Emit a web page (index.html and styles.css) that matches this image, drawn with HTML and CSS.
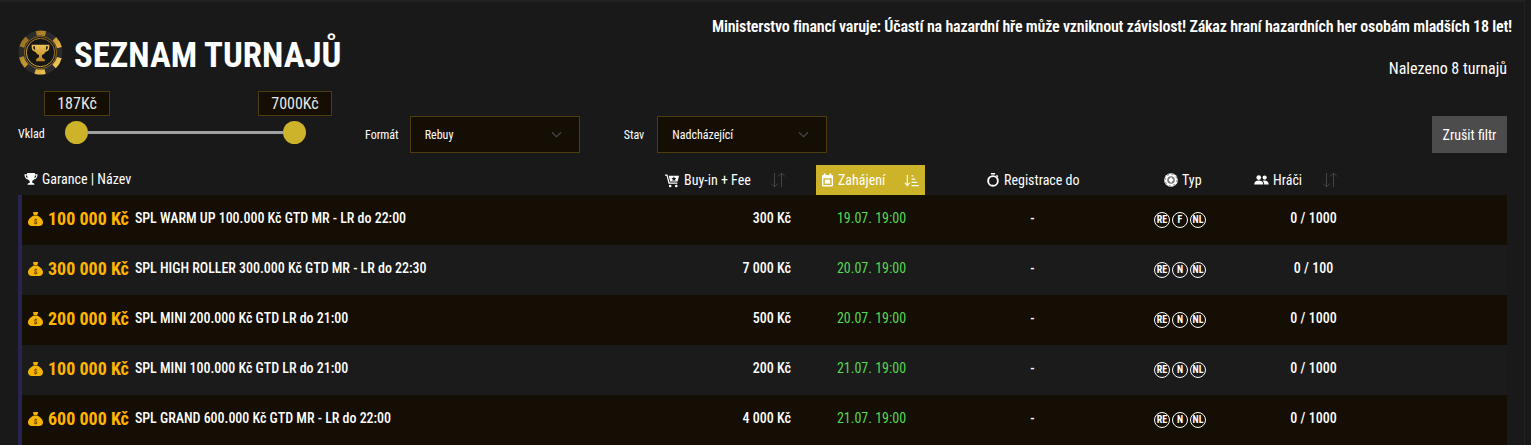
FILE: index.html
```html
<!DOCTYPE html>
<html lang="cs">
<head>
  <meta charset="UTF-8">
  <meta name="viewport" content="width=device-width, initial-scale=1.0">
  <title>Seznam turnajů</title>
  <link rel="stylesheet" href="styles.css">
</head>
<body>
  <svg class="defs" width="0" height="0">
    <defs>
      <symbol id="bag" viewBox="0 0 15 14">
        <path fill="#f5b400" d="M4.800 0c.9.5 1.600.1 2.700.1s1.800-.4 2.700-.1L9.200 3H5.800zM5.800 3.600h3.400C12 4.800 15 7.500 15 10.500c0 2.300-1.700 3.500-3.800 3.500H3.800C1.700 14 0 12.800 0 10.500c0-3 3-5.700 5.800-6.900z"/>
        <text x="7.500" y="12" font-size="7" font-weight="700" text-anchor="middle" fill="#5a3c00" font-family="Roboto, sans-serif">$</text>
      </symbol>
      <symbol id="sort" viewBox="0 0 16 16">
        <path fill="none" stroke="#444" stroke-width="1" d="M4.500 1v14M1 11.500l3.500 3.500 3.500-3.500M11.500 15V1M8 4.500L11.500 1 15 4.500"/>
      </symbol>
    </defs>
  </svg>

  <div class="page">
    <header class="top">
      <div class="title">
        <svg class="logo" viewBox="0 0 46 46">
          <defs>
            <linearGradient id="gold" x1="1" y1="0" x2="0" y2="1">
              <stop offset="0" stop-color="#8a6418"/>
              <stop offset=".6" stop-color="#d9a63a"/>
              <stop offset="1" stop-color="#f6d468"/>
            </linearGradient>
            <linearGradient id="cup" x1="0" y1="0" x2="0" y2="1">
              <stop offset="0" stop-color="#eec25a"/>
              <stop offset="1" stop-color="#b98520"/>
            </linearGradient>
          </defs>
          <circle cx="23" cy="23" r="22.500" fill="#2b2b2b"/>
          <circle cx="23" cy="23" r="20" fill="none" stroke="url(#gold)" stroke-width="5" stroke-dasharray="10.500 10.440" stroke-dashoffset="5.250" transform="rotate(-90 23 23)"/>
          <circle cx="23" cy="23" r="16.500" fill="#161616" stroke="#a87c22" stroke-width=".8"/>
          <circle cx="23" cy="23" r="14.500" fill="none" stroke="url(#gold)" stroke-width=".9"/>
          <path fill="url(#cup)" d="M14 15h18v3c0 2.500-1.500 4-4 4.500-.6 1.500-1.600 2.500-3.500 3v2.500l3 2.500v1.500H18.500V30l3-2.500v-2c-1.900-.5-2.900-1.500-3.500-3-2.500-.5-4-2-4-4.500zm1.600 1.600V18c0 1.200.7 2 1.900 2.500l-.3-3.900zm14.800 0h-1.600l-.3 3.900c1.200-.5 1.900-1.300 1.900-2.500z"/>
        </svg>
        <h1>SEZNAM TURNAJŮ</h1>
      </div>
      <div class="info">
        <p class="warning">Ministerstvo financí varuje: Účastí na hazardní hře může vzniknout závislost! Zákaz hraní hazardních her osobám mladších 18 let!</p>
        <p class="found">Nalezeno 8 turnajů</p>
      </div>
    </header>

    <div class="filters">
      <span class="label label-vklad">Vklad</span>
      <div class="slider">
        <span class="badge badge-min">187Kč</span>
        <span class="badge badge-max">7000Kč</span>
        <span class="thumb"></span>
        <span class="track"></span>
        <span class="thumb"></span>
      </div>
      <span class="label label-format">Formát</span>
      <div class="select">Rebuy
        <svg class="chevron" viewBox="0 0 12 7"><path fill="none" stroke="#444" stroke-width="1.300" d="M1 1l5 5 5-5"/></svg>
      </div>
      <span class="label label-stav">Stav</span>
      <div class="select">Nadcházející
        <svg class="chevron" viewBox="0 0 12 7"><path fill="none" stroke="#444" stroke-width="1.300" d="M1 1l5 5 5-5"/></svg>
      </div>
      <button class="reset">Zrušit filtr</button>
    </div>

    <div class="table">
      <div class="cols head">
        <div class="h-name">
          <svg class="ico" viewBox="0 0 16 16"><path fill="#fff" d="M3.500 1h9v1.500H15.500c0 3.500-1.500 5.500-4 6-.5.8-1.200 1.300-2 1.500v2.500c1.500 0 2.500.6 2.500 2H4c0-1.400 1-2 2.500-2V10c-.8-.2-1.500-.7-2-1.500-2.500-.5-4-2.500-4-6h3zM2 4c.2 1.500 1 2.500 2 3L3.600 4zm12 0h-1.600L12 7c1-.5 1.800-1.500 2-3z"/></svg>
          Garance | Název
        </div>
        <div class="h-buy">
          <svg class="ico ico-cart" viewBox="0 0 16 16"><path fill="#fff" d="M0 1.500h2.600l2.300 8.500h8.300v1.400H3.800L1.600 2.900H0zM4 3h11l-1.600 6H5.500z"/><path fill="#191919" d="M9.500 3.500l.8 1.700 1.800.2-1.300 1.300.3 1.800-1.600-.9-1.600.9.300-1.800-1.300-1.300 1.800-.2z"/><circle cx="5.500" cy="13.800" r="1.400" fill="#fff"/><circle cx="12" cy="13.800" r="1.400" fill="#fff"/></svg>
          Buy-in + Fee
          <svg class="sort sort-buy"><use href="#sort"/></svg>
        </div>
        <div class="h-start">
          <svg class="ico ico-cal" viewBox="0 0 12 14"><path fill="#fff" fill-rule="evenodd" d="M2 0h2v1.500h4V0h2v1.500h.6c.8 0 1.400.6 1.400 1.400v9.700c0 .8-.6 1.400-1.400 1.400H1.400C.6 14 0 13.400 0 12.600V2.900c0-.8.6-1.400 1.400-1.400H2zM1.500 5v7.500h9V5z"/><path fill="#fff" d="M3 6.500h6v4.500H3z"/></svg>
          <span>Zahájení</span>
          <svg class="sort-on" viewBox="0 0 16 14"><path fill="none" stroke="#fff" stroke-width="1.200" d="M3.500 1v11M1 9.500l2.500 3 2.500-3M8 2h2M8 5.500h4M8 9h6M8 12.500h8"/></svg>
        </div>
        <div class="h-reg">
          <svg class="ico ico-watch" viewBox="0 0 14 15"><circle cx="7" cy="8.500" r="5.200" fill="none" stroke="#fff" stroke-width="2"/><path fill="#fff" d="M4.800 0h4.400v1.500H4.800zM11.200 2l1.500 1.500-1 1-1.500-1.500z"/></svg>
          Registrace do
        </div>
        <div class="h-type">
          <svg class="ico" viewBox="0 0 14 14"><circle cx="7" cy="7" r="6.800" fill="#fff"/><circle cx="7" cy="7" r="6" fill="none" stroke="#999" stroke-width="1.400" stroke-dasharray="2 2.700"/><circle cx="7" cy="7" r="3.800" fill="#777"/><path fill="#fff" d="M7 4l2.500 3L7 10 4.500 7z"/></svg>
          Typ
        </div>
        <div class="h-players">
          <svg class="ico ico-users" viewBox="0 0 16 11"><circle cx="5" cy="2.800" r="2.600" fill="#fff"/><circle cx="11.500" cy="2.800" r="2.300" fill="#fff"/><path fill="#fff" d="M0 10.500C0 7.500 2 6 5 6s5 1.500 5 4.500zM11 10.500c0-1.800-.6-3.300-1.800-4.300 3.800-1 6.800.8 6.800 4.300z"/></svg>
          Hráči
          <svg class="sort sort-players"><use href="#sort"/></svg>
        </div>
      </div>

      <div class="cols row">
        <div class="c-name"><svg class="bag"><use href="#bag"/></svg><span class="amount">100 000 Kč</span><span class="name">SPL WARM UP 100.000 Kč GTD MR - LR do 22:00</span></div>
        <div class="c-buy">300 Kč</div>
        <div class="c-start">19.07. 19:00</div>
        <div class="c-reg">-</div>
        <div class="c-type"><span class="tag">RE</span><span class="tag">F</span><span class="tag">NL</span></div>
        <div class="c-players">0 / 1000</div>
      </div>
      <div class="cols row">
        <div class="c-name"><svg class="bag"><use href="#bag"/></svg><span class="amount">300 000 Kč</span><span class="name">SPL HIGH ROLLER 300.000 Kč GTD MR - LR do 22:30</span></div>
        <div class="c-buy">7 000 Kč</div>
        <div class="c-start">20.07. 19:00</div>
        <div class="c-reg">-</div>
        <div class="c-type"><span class="tag">RE</span><span class="tag">N</span><span class="tag">NL</span></div>
        <div class="c-players">0 / 100</div>
      </div>
      <div class="cols row">
        <div class="c-name"><svg class="bag"><use href="#bag"/></svg><span class="amount">200 000 Kč</span><span class="name">SPL MINI 200.000 Kč GTD LR do 21:00</span></div>
        <div class="c-buy">500 Kč</div>
        <div class="c-start">20.07. 19:00</div>
        <div class="c-reg">-</div>
        <div class="c-type"><span class="tag">RE</span><span class="tag">N</span><span class="tag">NL</span></div>
        <div class="c-players">0 / 1000</div>
      </div>
      <div class="cols row">
        <div class="c-name"><svg class="bag"><use href="#bag"/></svg><span class="amount">100 000 Kč</span><span class="name">SPL MINI 100.000 Kč GTD LR do 21:00</span></div>
        <div class="c-buy">200 Kč</div>
        <div class="c-start">21.07. 19:00</div>
        <div class="c-reg">-</div>
        <div class="c-type"><span class="tag">RE</span><span class="tag">N</span><span class="tag">NL</span></div>
        <div class="c-players">0 / 1000</div>
      </div>
      <div class="cols row">
        <div class="c-name"><svg class="bag"><use href="#bag"/></svg><span class="amount">600 000 Kč</span><span class="name">SPL GRAND 600.000 Kč GTD MR - LR do 22:00</span></div>
        <div class="c-buy">4 000 Kč</div>
        <div class="c-start">21.07. 19:00</div>
        <div class="c-reg">-</div>
        <div class="c-type"><span class="tag">RE</span><span class="tag">N</span><span class="tag">NL</span></div>
        <div class="c-players">0 / 1000</div>
      </div>
    </div>
  </div>
</body>
</html>
```

FILE: styles.css
```css
* {
  margin: 0;
  padding: 0;
  box-sizing: border-box;
}

html, body {
  height: 445px;
  overflow: hidden;
}

body {
  font-family: Roboto, "Liberation Sans", sans-serif;
  font-stretch: condensed;
  background-color: #191919;
  color: #fff;
  font-size: 14px;
}

.defs {
  position: absolute;
}

.page {
  border-top: 2px solid #222;
  border-right: 1px solid #222;
  height: 445px;
  margin-right: 6px;
  padding-right: 17px;
}

/* Cabecalho */
.top {
  display: flex;
  justify-content: space-between;
  height: 86px;
}

.title {
  display: flex;
  align-items: center;
  margin: 28px 0 0 18px;
  height: 45px;
  gap: 11px;
}

.logo {
  width: 45px;
  height: 45px;
}

h1 {
  font-size: 34.800px;
  font-weight: 700;
  margin-top: 5px;
}

.info {
  text-align: right;
}

.warning {
  font-size: 16px;
  font-weight: 600;
  letter-spacing: -.2px;
  margin: 15px -5px 0 0;
  line-height: 20px;
}

.found {
  font-size: 16px;
  font-weight: 450;
  margin-top: 22px;
  line-height: 20px;
}

/* Filtros */
.filters {
  display: flex;
  align-items: center;
  height: 37px;
  margin-top: 28px;
  padding-left: 18px;
}

.label {
  font-size: 12px;
  font-weight: 450;
}

.label-vklad {
  width: 47px;
  margin-top: -1px;
}

.label-format {
  margin: 0 11px 0 59px;
}

.label-stav {
  margin: 0 13px 0 44px;
}

.slider {
  position: relative;
  display: flex;
  align-items: center;
  width: 241px;
  margin-top: -4px;
}

.thumb {
  width: 23px;
  height: 23px;
  border-radius: 50%;
  background-color: #cdb32a;
  flex: none;
}

.track {
  flex: 1;
  height: 3px;
  background-color: #a0a0a0;
}

.badge {
  position: absolute;
  top: -30px;
  height: 25px;
  line-height: 23px;
  text-align: center;
  background-color: #150e04;
  border: 1px solid #4d3d0c;
  font-size: 16px;
  font-weight: 450;
  color: #e8e8e8;
}

.badge-min {
  left: -21px;
  width: 66px;
}

.badge-max {
  left: 193px;
  width: 74px;
}

.select {
  position: relative;
  display: flex;
  align-items: center;
  justify-content: space-between;
  width: 170px;
  height: 37px;
  padding: 0 17px 0 14px;
  background-color: #150e04;
  border: 1px solid #4d3d0c;
  font-size: 12px;
  font-weight: 450;
}

.chevron {
  width: 11px;
  height: 7px;
}

.reset {
  margin-left: auto;
  width: 75px;
  height: 37px;
  background-color: #4c4c4c;
  color: #fff;
  border: none;
  font-family: inherit;
  font-stretch: condensed;
  font-size: 14px;
  font-weight: 450;
}

/* Tabela */
.table {
  margin: 12px 0 0 18px;
}

.cols {
  display: grid;
  grid-template-columns: 634px 160px 109px 215px 76px 194px 99px;
  border-left: 4px solid transparent;
  align-items: center;
}

.head {
  height: 30px;
  font-size: 14px;
  font-weight: 450;
}

.head > div {
  display: flex;
  align-items: center;
  height: 30px;
}

.h-name {
  padding-left: 2px;
  padding-bottom: 2px;
}

.ico {
  width: 14px;
  height: 14px;
  margin-right: 4px;
  flex: none;
}

.h-buy {
  padding-left: 9px;
}

.ico-cart {
  width: 15px;
  height: 15px;
}

.sort {
  width: 16px;
  height: 16px;
}

.sort-buy {
  margin-left: 19px;
}

.sort-players {
  margin-left: 20px;
}

.h-start {
  background-color: #cdb32a;
  padding-left: 6px;
}

.ico-cal {
  width: 11px;
  margin-right: 5px;
}

.sort-on {
  width: 15px;
  height: 13px;
  margin-left: 19px;
}

.h-reg {
  padding-left: 61px;
}

.h-type {
  padding-left: 24px;
}

.h-players {
  padding-left: 38px;
}

.ico-users {
  width: 15px;
  height: 10px;
}

.row {
  height: 50px;
  font-size: 14px;
  font-weight: 470;
  background-color: #1b1b1b;
  border-left-color: #29244f;
}

.row:nth-child(even) {
  background-color: #150e04;
}

.row > div {
  padding-bottom: 5px;
}

.c-name {
  display: flex;
  align-items: center;
  padding-left: 6px;
}

.bag {
  width: 15px;
  height: 14px;
  margin: 3px 5px 0 0;
}

.amount {
  font-size: 18px;
  font-weight: 700;
  color: #ffb400;
  margin: 2px 6px 0 0;
}

.name {
  letter-spacing: -.03px;
}

.c-buy {
  text-align: right;
  padding-right: 25px;
}

.c-start {
  text-align: center;
  color: #55d84f;
  font-weight: 450;
  padding-left: 2px;
}

.c-reg,
.c-players {
  text-align: center;
}

.c-players {
  padding-left: 1px;
}

.row > .c-type {
  display: flex;
  justify-content: center;
  gap: 2px;
  padding: 0 0 0 4px;
}

.tag {
  width: 16px;
  height: 16px;
  border: 1.500px solid #fff;
  border-radius: 50%;
  font-size: 10px;
  font-weight: 700;
  line-height: 13px;
  text-align: center;
}
```
